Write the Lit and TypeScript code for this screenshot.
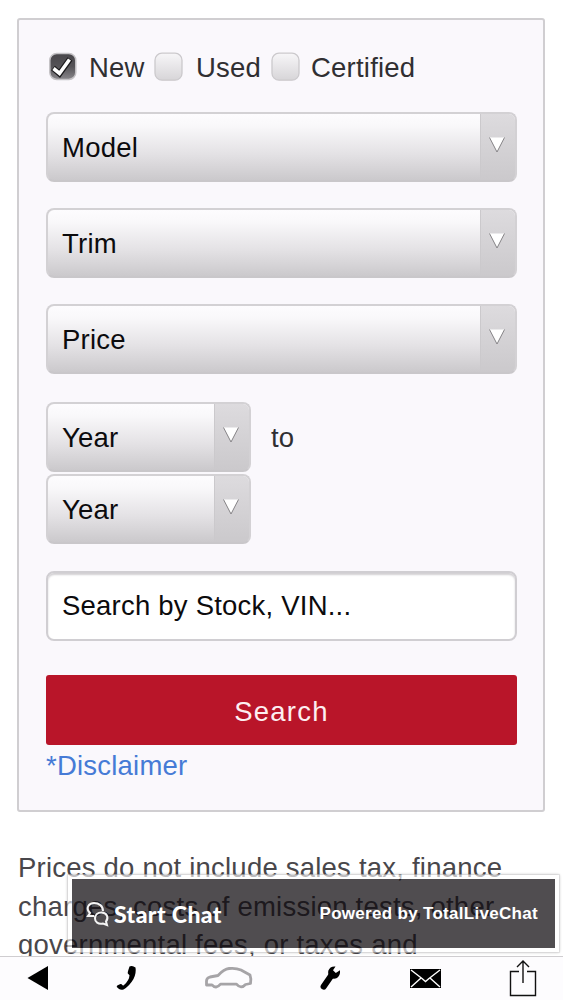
import { LitElement, html, css, svg } from "lit";
import { customElement, property } from "lit/decorators.js";

@customElement("select-box")
class SelectBox extends LitElement {
  @property() label = "";
  static styles = css`
    :host { display: flex; box-sizing: border-box; height: 70px; border: 2px solid #d3d1d4; border-bottom-color: #c9c7ca; border-radius: 8px; overflow: hidden; background: linear-gradient(#fdfcfe 0%, #f9f8fa 18%, #e4e2e5 60%, #cbc9cc 100%); }
    .text { flex: 1; padding-left: 14px; line-height: 68px; color: #0c0b0d; }
    .arrow { box-sizing: border-box; width: 35px; padding: 23px 0 0 8px; border-left: 1px solid #cbc9cc; background: linear-gradient(#dddbde, #cbc9cc); }
    svg { display: block; }
  `;
  render() {
    return html`<div class="text">${this.label}</div>
      <div class="arrow"><svg width="16" height="16" viewBox="0 0 16 16"><path d="M.5 .5H15.5L8 15Z" fill="#fff"/><path d="M.5 .5L8 15L15.5 .5" fill="none" stroke="#858386" stroke-width="1"/></svg></div>`;
  }
}

@customElement("check-item")
class CheckItem extends LitElement {
  @property({ type: Boolean }) checked = false;
  static styles = css`
    :host { display: block; flex: none; width: 29px; height: 29px; }
    svg { display: block; }
  `;
  render() {
    return html`<svg width="29" height="29" viewBox="0 0 29 29">
      <defs>
        <linearGradient id="on" x2="0" y2="1"><stop stop-color="#48464a"/><stop offset=".5" stop-color="#555357"/><stop offset="1" stop-color="#88868a"/></linearGradient>
        <linearGradient id="off" x2="0" y2="1"><stop stop-color="#f7f6f8"/><stop offset="1" stop-color="#d7d5d8"/></linearGradient>
      </defs>
      ${this.checked
        ? svg`<rect x=".8" y="1.4" width="26" height="26" rx="7" fill="url(#on)" stroke="#c4c2c5" stroke-width="1.5"/>
          <path d="M4 16L10.500 21.500L21 7" fill="none" stroke="#1c1b1d" stroke-width="6"/>
          <path d="M4.500 16.500L10.500 21.500L20.500 7.500" fill="none" stroke="#fff" stroke-width="3.6"/>`
        : svg`<rect x="1" y="1.2" width="27" height="27" rx="7" fill="url(#off)" stroke="#cbc9cc" stroke-width="1.3"/>`}
    </svg>`;
  }
}

@customElement("app-root")
class AppRoot extends LitElement {
  static styles = css`
    :host { display: flex; flex-direction: column; position: relative; box-sizing: border-box; width: 563px; height: 1000px; overflow: hidden; padding-top: 18px; background: #fff; color: #302f32; font: 27.5px "Liberation Sans", sans-serif; letter-spacing: .22px; }
    .panel { flex: none; box-sizing: border-box; width: 528px; height: 794px; margin-left: 17px; padding: 31px 26px 0 27px; border: 2px solid #d0ced1; border-radius: 3px; background: #faf8fc; }
    .checks { display: grid; grid-template-columns: 40px 65px 42px 75px 40px auto; height: 29px; margin-left: 3px; align-items: center; }
    .checks span { padding-top: 2px; line-height: 29px; white-space: nowrap; }
    .field { margin-top: 26.25px; }
    .first { margin-top: 31.6px; }
    .years { display: grid; grid-template-columns: 205px auto; gap: 2px 20px; margin-top: 28px; justify-content: start; }
    .years .to { height: 70px; line-height: 72px; }
    .search { box-sizing: border-box; height: 70px; margin-top: 26.5px; padding-left: 14px; border: 2px solid #d0ced2; border-radius: 8px; background: #fff; box-shadow: inset 0 2px 2px #d2d0d3; line-height: 66px; color: #0c0b0d; }
    .button { display: block; box-sizing: border-box; width: 100%; height: 70px; margin-top: 34.6px; padding: 3px 0 0; border: 0; border-radius: 3px; background: #b91529; color: #fdeff1; font: inherit; letter-spacing: 1.2px; }
    .link { display: block; margin-top: 6px; line-height: 30px; color: #467bd6; text-decoration: none; }
    .legal { margin: 37px 0 0 18px; line-height: 38.5px; color: #49474b; white-space: nowrap; }
    .t { display: block; width: max-content; }
    .chat { position: absolute; left: 68px; top: 875px; box-sizing: border-box; width: 491px; height: 77px; border: 4px solid #ffffffa0; outline: 1px solid #d5d3d680; box-shadow: 0 0 3px #0005; display: flex; align-items: center; justify-content: space-between; padding: 0 17px 0 13px; background: rgba(12, 9, 13, .72); background-clip: padding-box; color: #fff; font-weight: bold; }
    .start { display: flex; align-items: center; gap: 4px; font: 900 23px Lato, sans-serif; letter-spacing: .4px; }
    .powered { font-size: 17px; letter-spacing: .3px; }
    .bar { position: absolute; left: 0; top: 956px; box-sizing: border-box; width: 563px; height: 44px; border-top: 1px solid #cfcdd0; background: #fdfcfe; }
    svg { display: block; }
  `;
  render() {
    return html`
      <div class="panel">
        <div class="checks">
          <check-item checked></check-item><span>New</span>
          <check-item></check-item><span>Used</span>
          <check-item></check-item><span>Certified</span>
        </div>
        <select-box class="first" label="Model"></select-box>
        <select-box class="field" label="Trim"></select-box>
        <select-box class="field" label="Price"></select-box>
        <div class="years">
          <select-box label="Year"></select-box><span class="to">to</span>
          <select-box label="Year"></select-box>
        </div>
        <div class="search">Search by Stock, VIN...</div>
        <button class="button">Search</button>
        <a class="link">*Disclaimer</a>
      </div>
      <div class="legal">
        <span class="t">Prices do not include sales tax, finance</span>
        <span class="t">charges, costs of emission tests, other</span>
        <span class="t">governmental fees, or taxes and</span>
      </div>
      <div class="chat">
        <div class="start">
          <svg width="25" height="26" viewBox="0 0 25 26" fill="none" stroke="#f4f4f4" stroke-width="2"><path d="M9 15H3L5 12C0 7 4 2 9 2C14 2 18 5 18 10"/><path d="M22 24L18 22.500C13 23.500 10 21 10 17.500C10 13.500 13 11.500 16.500 11.500C22 11.500 24 17 21 20.500Z"/></svg>
          <span>Start Chat</span>
        </div>
        <span class="powered">Powered by TotalLiveChat</span>
      </div>
      <div class="bar">
        <svg width="563" height="43" viewBox="0 957 563 43">
          <path d="M27.5 978L48 966V990Z"/>
          <path d="M129.500 966.500Q131 965.500 133 966.300L135.500 967.500Q136.500 973 133.500 979Q129.500 986 123.500 989.500Q121 990.300 119 989L116.800 987Q116.500 986 117.700 985.300L120.500 984Q121.500 983.700 122.500 985.200L123.500 985.500Q129.300 980.500 129.500 975.200L127.800 973.500Q127.500 972.500 128.200 970.500Z"/>
          <path d="M206.500 985V981Q206.500 978 210 977L218 975.500Q224 969 229 968.500Q236 967.800 241 970L250 975Q251.500 979 250.500 983.500L245.500 984.500Q241 989.500 236.500 984.200H220.500Q216 989.500 212 984.800Z" fill="none" stroke="#a6a4a7" stroke-width="2.8" stroke-linejoin="round"/>
          <path d="M323.700 986.500L332 974.500" fill="none" stroke="#000" stroke-width="6.200" stroke-linecap="round"/>
          <path d="M335.500 966.500L333 970.300L335.800 973L340 970.300Q340.500 975.500 337 978Q333.500 979.800 330.500 977.500Q327.500 975 328.300 970.800Q330 966 335.500 966.500Z"/>
          <rect x="410" y="969" width="31" height="19"/>
          <path d="M411 970L422 978.500L425.500 981.500L429 978.500L440 970M411 987L421 978M440 987L430 978" fill="none" stroke="#fff" stroke-width="1.4"/>
          <path d="M519 971.500H510.500V995.500H535.500V971.500H527M523 983V961M517 967L523 961L529 967" fill="none" stroke="#111" stroke-width="1.4"/>
        </svg>
      </div>`;
  }
}
